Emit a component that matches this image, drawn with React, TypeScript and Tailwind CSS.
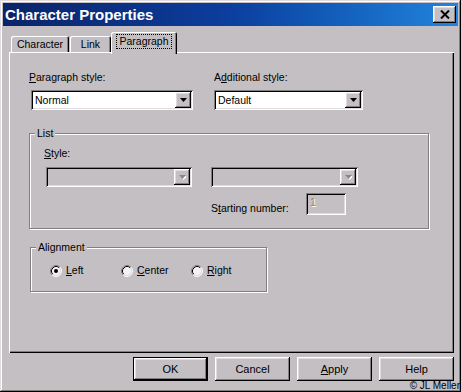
import React from 'react';

// classic 3D edges
const raised =
  'shadow-[inset_-1px_-1px_0_#000,inset_1px_1px_0_#fff,inset_-2px_-2px_0_#808080,inset_2px_2px_0_#dfdbdf]';
const sunken =
  'shadow-[inset_1px_1px_0_#808080,inset_-1px_-1px_0_#fff,inset_2px_2px_0_#000,inset_-2px_-2px_0_#dfdbdf]';
const etched = 'border border-[#808080] shadow-[inset_1px_1px_0_#fff,1px_1px_0_#fff]';

const U = ({ children }: { children: React.ReactNode }) => (
  <span className="underline underline-offset-[1px] decoration-1">{children}</span>
);

const ArrowButton = ({ disabled }: { disabled?: boolean }) => (
  <div className={`w-[16px] h-[16px] shrink-0 bg-[#c3bfc3] flex items-center justify-center ${raised}`}>
    <svg width="7" height="5" viewBox="0 0 7 5">
      {disabled && <path d="M1 1h7L4.5 5z" fill="#fff" />}
      <path d="M0 0h7L3.5 4z" fill={disabled ? '#8a868a' : '#000'} />
    </svg>
  </div>
);

type ComboProps = { value?: string; disabled?: boolean; className?: string };

const Combo = ({ value = '', disabled, className = '' }: ComboProps) => (
  <div
    className={`h-[20px] p-[2px] flex items-center ${sunken} ${disabled ? 'bg-[#c3bfc3]' : 'bg-white'} ${className}`}
  >
    <div className="flex-1 pl-[2px] leading-[13px] text-black">{value}</div>
    <ArrowButton disabled={disabled} />
  </div>
);

const Radio = ({ checked }: { checked?: boolean }) => (
  <svg width="12" height="12" viewBox="0 0 12 12" className="shrink-0">
    <circle cx="6" cy="6" r="5" fill="#f4f2f4" />
    <path d="M2.11 9.89A5.5 5.5 0 0 1 9.89 2.11" fill="none" stroke="#808080" />
    <path d="M9.89 2.11A5.5 5.5 0 0 1 2.11 9.89" fill="none" stroke="#fff" />
    <path d="M2.82 9.18A4.5 4.5 0 0 1 9.18 2.82" fill="none" stroke="#000" />
    <path d="M9.18 2.82A4.5 4.5 0 0 1 2.82 9.18" fill="none" stroke="#dfdbdf" />
    {checked && <circle cx="6" cy="6" r="2" fill="#000" />}
  </svg>
);

const Tab = ({ label, selected, className = '' }: { label: string; selected?: boolean; className?: string }) => (
  <div
    className={`flex items-start justify-center rounded-t-[2px] bg-[#c3bfc3] shadow-[inset_1px_1px_0_#fff,inset_-1px_0_0_#000,inset_-2px_0_0_#808080] ${
      selected ? 'h-[22px] -mb-[2px] pt-[3px] z-10' : 'h-[16px] pt-[2px]'
    } ${className}`}
  >
    <span className={`leading-[13px] px-[2px] ${selected ? 'outline-1 outline-dotted outline-black' : ''}`}>
      {label}
    </span>
  </div>
);

const Button = ({ children, isDefault }: { children: React.ReactNode; isDefault?: boolean }) => (
  <div className={`w-[75px] h-[24px] ${isDefault ? 'border border-black' : ''}`}>
    <div className={`w-full h-full flex items-center justify-center bg-[#c3bfc3] text-[11px] ${raised}`}>
      {children}
    </div>
  </div>
);

export default function App() {
  return (
    <div
      className={`relative w-[461px] h-[392px] p-[3px] flex flex-col bg-[#c3bfc3] text-black text-[10.5px] font-['Liberation_Sans',Arial,sans-serif] shadow-[inset_-1px_-1px_0_#000,inset_1px_1px_0_#dfdbdf,inset_-2px_-2px_0_#808080,inset_2px_2px_0_#fff]`}
    >
      {/* Title bar */}
      <div className="h-[23px] shrink-0 flex items-center justify-between pl-[2px] pr-[2px] bg-linear-to-r from-[#0a246a] via-[#0c3e9e] to-[#2284dc]">
        <span className="text-white font-bold text-[15px] leading-[18px]">Character Properties</span>
        <div className={`w-[23px] h-[17px] flex items-center justify-center bg-[#c3bfc3] ${raised}`}>
          <svg width="10" height="9" viewBox="0 0 10 9">
            <path d="M1 0.5L9 8.5M9 0.5L1 8.5" stroke="#000" strokeWidth="2" />
          </svg>
        </div>
      </div>

      {/* Tabs */}
      <div className="mt-[7px] h-[19px] ml-[8px] flex items-end relative">
        <Tab label="Character" className="w-[58px]" />
        <Tab label="Link" className="w-[41px] ml-[1px]" />
        <Tab label="Paragraph" selected className="w-[66px]" />
      </div>

      {/* Tab panel */}
      <div
        className={`ml-[6px] w-[445px] h-[301px] shrink-0 pt-[19px] pl-[20px] shadow-[inset_1px_1px_0_#fff,inset_-1px_-1px_0_#000,inset_-2px_-2px_0_#808080]`}
      >
        <div className="flex">
          <div className="w-[185px]">
            <div className="leading-[13px]">
              <U>P</U>aragraph style:
            </div>
            <Combo value="Normal" className="mt-[6px] ml-[2px] w-[162px]" />
          </div>
          <div>
            <div className="leading-[13px]">
              A<U>d</U>ditional style:
            </div>
            <Combo value="Default" className="mt-[6px] w-[149px]" />
          </div>
        </div>

        {/* List */}
        <fieldset className={`mt-[17px] w-[400px] h-[102px] ${etched}`}>
          <legend className="ml-[5px] px-[2px] leading-[13px] bg-[#c3bfc3]">List</legend>
          <div className="pl-[14px] pt-[7px]">
            <div className="leading-[13px]">
              <U>S</U>tyle:
            </div>
            <div className="flex mt-[7px]">
              <Combo disabled className="ml-[2px] w-[146px]" />
              <Combo disabled className="ml-[19px] w-[147px]" />
            </div>
            <div className="flex items-center mt-[6px] ml-[167px]">
              <div className="w-[95px] leading-[13px] pt-[8px]">
                S<U>t</U>arting number:
              </div>
              <div className={`w-[40px] h-[22px] pl-[4px] pt-[3px] leading-[13px] text-[#8a868a] ${sunken}`}>
                <span className="[text-shadow:1px_1px_0_#fff]">1</span>
              </div>
            </div>
          </div>
        </fieldset>

        {/* Alignment */}
        <fieldset className={`mt-[12px] ml-[1px] w-[237px] h-[51px] ${etched}`}>
          <legend className="ml-[5px] px-[2px] leading-[13px] bg-[#c3bfc3]">Alignment</legend>
          <div className="flex items-center pl-[19px] pt-[10px]">
            <label className="w-[71px] flex items-center gap-[4px]">
              <Radio checked />
              <span className="leading-[13px]">
                <U>L</U>eft
              </span>
            </label>
            <label className="w-[70px] flex items-center gap-[4px]">
              <Radio />
              <span className="leading-[13px]">
                <U>C</U>enter
              </span>
            </label>
            <label className="flex items-center gap-[4px]">
              <Radio />
              <span className="leading-[13px]">
                <U>R</U>ight
              </span>
            </label>
          </div>
        </fieldset>
      </div>

      {/* Buttons */}
      <div className="mt-[4px] mr-[4px] flex justify-end gap-[7px]">
        <Button isDefault>OK</Button>
        <Button>Cancel</Button>
        <Button>
          <U>A</U>pply
        </Button>
        <Button>Help</Button>
      </div>

      <div className="absolute right-[1px] bottom-[1px] text-[10px] leading-[11px]">© JL Meller</div>
    </div>
  );
}
